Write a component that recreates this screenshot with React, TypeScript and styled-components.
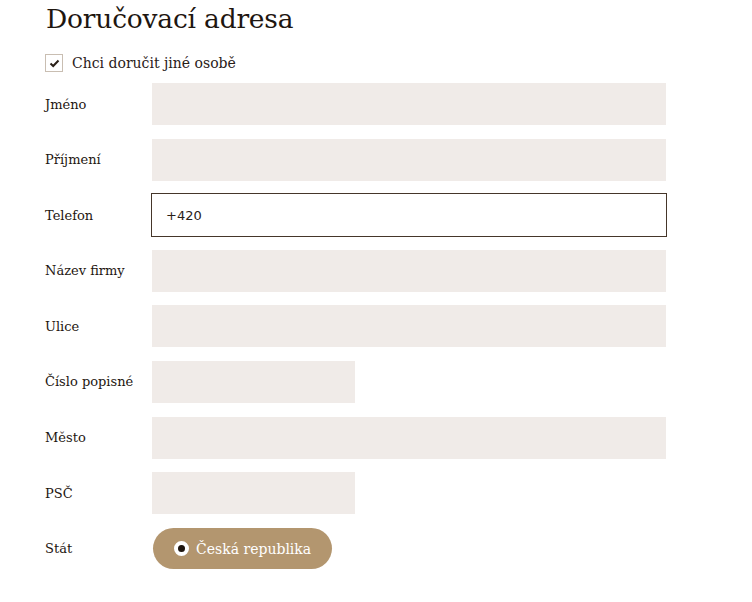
import styled, { createGlobalStyle } from "styled-components";

const GlobalStyle = createGlobalStyle`
  html, body {
    margin: 0;
    padding: 0;
    background: #fff;
  }
  body {
    font-family: "DejaVu Serif", "Liberation Serif", serif;
    color: #1e1610;
  }
`;

type Field = { label: string; half?: boolean; value?: string; active?: boolean };

const fields: Field[] = [
  { label: "Jméno" },
  { label: "Příjmení" },
  { label: "Telefon", value: "+420", active: true },
  { label: "Název firmy" },
  { label: "Ulice" },
  { label: "Číslo popisné", half: true },
  { label: "Město" },
  { label: "PSČ", half: true },
];

export default function App() {
  return (
    <>
      <GlobalStyle />
      <Page>
        <Title>Doručovací adresa</Title>
        <CheckRow>
          <CheckBox>
            <svg width="11" height="9" viewBox="0 0 11 9">
              <path d="M1.5 4.5 L4.2 7 L9.5 1.5" fill="none" stroke="#2a2018" strokeWidth="2" />
            </svg>
          </CheckBox>
          <CheckLabel>Chci doručit jiné osobě</CheckLabel>
        </CheckRow>
        <Form>
          {fields.map((f) => (
            <Row key={f.label}>
              <Label>{f.label}</Label>
              <Input $half={f.half} $active={f.active} defaultValue={f.value} />
            </Row>
          ))}
          <Row>
            <Label>Stát</Label>
            <CountryPill>
              <Radio />
              Česká republika
            </CountryPill>
          </Row>
        </Form>
      </Page>
    </>
  );
}

const Page = styled.div`
  padding: 2px 0 0 45px;
  width: 622px;
`;

const Title = styled.h1`
  margin: 0 0 0 1px;
  font-size: 26.5px;
  font-weight: 400;
  line-height: 34px;
  letter-spacing: -0.2px;
  color: #1e1610;
`;

const CheckRow = styled.div`
  display: flex;
  align-items: center;
  gap: 9px;
  margin-top: 18px;
`;

const CheckBox = styled.span`
  box-sizing: border-box;
  width: 18px;
  height: 18px;
  border: 1px solid #c9beb2;
  display: flex;
  align-items: center;
  justify-content: center;
  background: #fff;
`;

const CheckLabel = styled.span`
  font-size: 14px;
  color: #2a2018;
`;

const Form = styled.div`
  display: flex;
  flex-direction: column;
  gap: 13.6px;
  margin-top: 11px;
`;

const Row = styled.div`
  display: flex;
  align-items: center;
  height: 42px;
`;

const Label = styled.span`
  width: 107px;
  flex: none;
  font-size: 13px;
  color: #1e1610;
`;

const Input = styled.input<{ $half?: boolean; $active?: boolean }>`
  box-sizing: border-box;
  width: ${(p) => (p.$half ? "203px" : p.$active ? "516px" : "514px")};
  height: ${(p) => (p.$active ? "44px" : "42px")};
  margin-left: ${(p) => (p.$active ? "-1px" : "0")};
  border: ${(p) => (p.$active ? "1px solid #45362a" : "none")};
  background: ${(p) => (p.$active ? "#fff" : "#f0ebe8")};
  padding: 0 14px;
  font-family: "DejaVu Sans", sans-serif;
  font-size: 13px;
  color: #2a2018;
  outline: none;
`;

const CountryPill = styled.div`
  display: flex;
  align-items: center;
  gap: 7px;
  height: 41px;
  padding: 0 21px 0 21px;
  margin-left: 1px;
  border-radius: 21px;
  background: #b3966f;
  color: #fff;
  font-size: 14px;
`;

const Radio = styled.span`
  box-sizing: border-box;
  width: 15px;
  height: 15px;
  border-radius: 50%;
  background: #fff;
  border: 4px solid #fff;
  box-shadow: inset 0 0 0 1px #ddd;
  position: relative;
  &::after {
    content: "";
    position: absolute;
    inset: 0;
    border-radius: 50%;
    background: #1e1610;
  }
`;
